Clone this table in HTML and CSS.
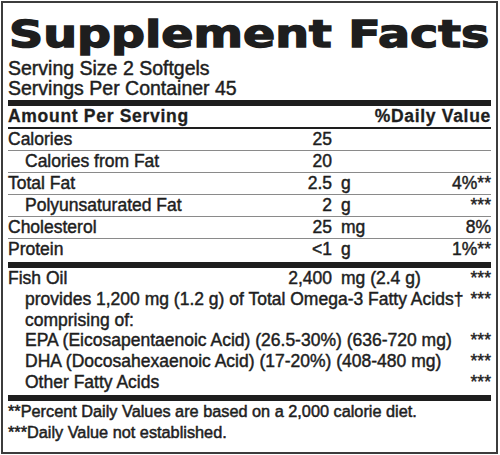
FILE: index.html
```html
<!DOCTYPE html>
<html lang="en">
<head>
<meta charset="utf-8">
<title>Supplement Facts</title>
<link rel="stylesheet" href="styles.css">
</head>
<body>
<div class="label">
  <h1 class="title"><span class="title-text">Supplement Facts</span></h1>
  <div class="serving">
    <div>Serving Size 2 Softgels</div>
    <div>Servings Per Container 45</div>
  </div>
  <div class="bar"></div>
  <div class="row head">
    <span class="c-label">Amount Per Serving</span>
    <span class="c-dvhead">%Daily Value</span>
  </div>
  <div class="row line">
    <span class="c-label">Calories</span><span class="c-amt">25</span><span class="c-unit"></span><span class="c-dv"></span>
  </div>
  <div class="row line">
    <span class="c-label indent">Calories from Fat</span><span class="c-amt">20</span><span class="c-unit"></span><span class="c-dv"></span>
  </div>
  <div class="row line">
    <span class="c-label">Total Fat</span><span class="c-amt">2.5</span><span class="c-unit">g</span><span class="c-dv">4%**</span>
  </div>
  <div class="row line">
    <span class="c-label indent">Polyunsaturated Fat</span><span class="c-amt">2</span><span class="c-unit">g</span><span class="c-dv">***</span>
  </div>
  <div class="row line">
    <span class="c-label">Cholesterol</span><span class="c-amt">25</span><span class="c-unit">mg</span><span class="c-dv">8%</span>
  </div>
  <div class="row">
    <span class="c-label">Protein</span><span class="c-amt">&lt;1</span><span class="c-unit">g</span><span class="c-dv">1%**</span>
  </div>
  <div class="bar"></div>
  <div class="section">
    <div class="row tight">
      <span class="c-label">Fish Oil</span><span class="c-amt">2,400</span><span class="c-unit">mg (2.4 g)</span><span class="c-dv">***</span>
    </div>
    <div class="row tight">
      <span class="c-wide indent">provides 1,200 mg (1.2 g) of Total Omega-3 Fatty Acids†</span><span class="c-dv">***</span>
    </div>
    <div class="row tight">
      <span class="c-wide indent">comprising of:</span>
    </div>
    <div class="row tight">
      <span class="c-wide indent">EPA (Eicosapentaenoic Acid) (26.5-30%) (636-720 mg)</span><span class="c-dv">***</span>
    </div>
    <div class="row tight">
      <span class="c-wide indent">DHA (Docosahexaenoic Acid) (17-20%) (408-480 mg)</span><span class="c-dv">***</span>
    </div>
    <div class="row tight">
      <span class="c-wide indent">Other Fatty Acids</span><span class="c-dv">***</span>
    </div>
  </div>
  <div class="bar bar-low"></div>
  <div class="notes">
    <div>**Percent Daily Values are based on a 2,000 calorie diet.</div>
    <div>***Daily Value not established.</div>
  </div>
</div>
</body>
</html>
```

FILE: styles.css
```css
html, body {
  margin: 0;
  padding: 0;
  background: #ffffff;
}

body {
  font-family: "Liberation Sans", Arial, sans-serif;
  color: #1e1e1e;
}

.label {
  box-sizing: border-box;
  margin: 1px;
  width: 497px;
  height: 453px;
  border: 2px solid #3c3c3c;
  padding: 0 5px;
  font-size: 17.5px;
  -webkit-text-stroke: 0.45px #1e1e1e;
}

.title {
  margin: 0;
  padding-top: 9px;
  height: 43px;
  line-height: 44px;
  font-family: "DejaVu Sans", sans-serif;
  font-weight: 700;
  font-size: 38px;
  white-space: nowrap;
  -webkit-text-stroke: 1.4px #1e1e1e;
}

.title-text {
  display: inline-block;
  margin-left: 1px;
  transform: scaleX(1.25);
  transform-origin: left center;
}

.serving {
  margin-top: 3px;
  line-height: 20px;
  font-size: 19.5px;
}

.bar {
  margin-top: 2px;
  height: 6px;
  background: #1e1e1e;
}

.bar-low {
  margin-top: 2px;
}

.row {
  display: grid;
  grid-template-columns: 264px 60px 108px 51px;
  height: 21px;
  line-height: 21px;
  white-space: nowrap;
}

.row.line {
  border-bottom: 1px solid #8a8a8a;
}

.row.head {
  font-weight: 700;
  letter-spacing: 0.7px;
  border-bottom: 2px solid #1e1e1e;
  -webkit-text-stroke: 0.3px #1e1e1e;
}

.row.tight {
  height: 20.8px;
  line-height: 20.8px;
}

.c-label {
  grid-column: 1;
}

.c-wide {
  grid-column: 1 / 4;
}

.indent {
  padding-left: 17px;
}

.c-amt {
  grid-column: 2;
  text-align: right;
}

.c-unit {
  grid-column: 3;
  padding-left: 9px;
}

.c-dv {
  grid-column: 4;
  text-align: right;
}

.c-dvhead {
  grid-column: 3 / 5;
  text-align: right;
}

.notes {
  line-height: 21.5px;
  font-size: 16.3px;
  -webkit-text-stroke: 0.5px #1e1e1e;
}
```
